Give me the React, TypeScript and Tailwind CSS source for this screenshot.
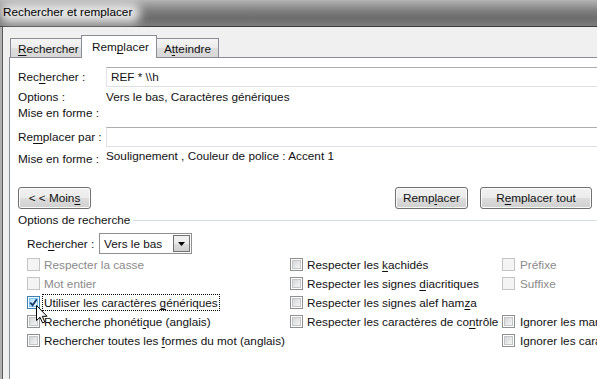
import type { ReactNode } from 'react'

function K({ children }: { children: ReactNode }) {
  return <span className="underline underline-offset-[2px] decoration-1">{children}</span>
}

function Btn({ children, w }: { children: ReactNode; w: string }) {
  return (
    <div
      className={`${w} h-[22px] shrink-0 flex items-center justify-center rounded-[3px] border border-[#707070] bg-[linear-gradient(#f2f2f2_0%,#ebebeb_50%,#dddddd_51%,#cfcfcf_100%)] shadow-[inset_0_0_0_1px_#fbfbfb]`}
    >
      <span className="whitespace-nowrap">{children}</span>
    </div>
  )
}

function Check({ state = 'off' }: { state?: 'off' | 'on' | 'disabled' }) {
  if (state === 'disabled') {
    return <div className="w-[13px] h-[13px] shrink-0 border border-[#c4c4c4] bg-[#f4f4f4]" />
  }
  if (state === 'on') {
    return (
      <div className="w-[13px] h-[13px] shrink-0 border border-[#3c7fb1] bg-white p-px">
        <div className="w-full h-full border border-[#79c6f9] bg-[linear-gradient(135deg,#b1dffd,#eaf6fd)] relative">
          <svg viewBox="0 0 9 9" className="absolute -left-px -top-px w-[9px] h-[9px]">
            <path d="M1.2 4.6 L3.6 7.2 L7.8 1.2" fill="none" stroke="#1c3a70" strokeWidth="1.8" />
          </svg>
        </div>
      </div>
    )
  }
  return (
    <div className="w-[13px] h-[13px] shrink-0 border border-[#8e8f8f] bg-white p-px">
      <div className="w-full h-full border border-[#c3c5c8] bg-[linear-gradient(135deg,#d4d6d9,#f5f5f5)]" />
    </div>
  )
}

function Opt({
  state,
  children,
  gap = 'gap-[4px]',
}: {
  state?: 'off' | 'on' | 'disabled'
  children: ReactNode
  gap?: string
}) {
  return (
    <div className={`h-[19px] flex items-center ${gap} whitespace-nowrap ${state === 'disabled' ? 'text-[#8a8a8a]' : ''}`}>
      <Check state={state} />
      <span>{children}</span>
    </div>
  )
}

export default function App() {
  return (
    <div className="w-[597px] h-[379px] overflow-hidden relative bg-[#f0f0f0] font-['Liberation_Sans',Arial,sans-serif] text-[11.75px] leading-[16px] text-[#111]">
      {/* title bar */}
      <div className="relative h-[27px] border-b border-[#3e3e3e] bg-[linear-gradient(#b4b4b4_0%,#9a9a9a_20%,#7c7c7c_45%,#6c6c6c_70%,#7d7d7d_100%)]">
        <div className="absolute left-0 top-[3px] w-[140px] h-[20px] rounded-[8px] bg-[#e4e4e4] blur-[5px]" />
        <div className="relative pl-[3px] pt-[4px] text-black whitespace-nowrap">Rechercher et remplacer</div>
      </div>

      <div className="flex h-full">
        <div className="w-[2px] shrink-0 bg-[#b0b0b0]" />
        <div className="w-px shrink-0 bg-[#5a5a5a]" />
        <div className="flex-1 min-w-0 pt-[8px] pl-[6px]">
          {/* tabs */}
          <div className="flex items-end h-[22px] pl-px relative z-10">
            <div className="w-[72px] h-[19px] shrink-0 border border-b-0 border-[#898c95] bg-[linear-gradient(#f5f5f5_0%,#ebebeb_50%,#dedede_51%,#d6d6d6_100%)] pl-[7px] pt-[2px] whitespace-nowrap">
              <K>R</K>echercher
            </div>
            <div className="w-[76px] h-[23px] shrink-0 -mx-px -mb-px border border-b-0 border-[#898c95] bg-white pl-[10px] pt-[3px] whitespace-nowrap">
              Rem<K>p</K>lacer
            </div>
            <div className="w-[63px] h-[19px] shrink-0 border border-b-0 border-[#898c95] bg-[linear-gradient(#f5f5f5_0%,#ebebeb_50%,#dedede_51%,#d6d6d6_100%)] pl-[7px] pt-[2px] whitespace-nowrap">
              A<K>t</K>teindre
            </div>
          </div>

          {/* panel */}
          <div className="w-[760px] h-[400px] border border-[#898c95] bg-white pl-[8px] pt-[9px]">
            <div className="flex items-center h-[20px]">
              <div className="w-[88px] shrink-0 whitespace-nowrap">
                Rec<K>h</K>ercher :
              </div>
              <div className="w-[560px] h-[20px] border border-[#abadb3] border-b-[#dbdfe6] border-l-[#e2e3ea] pl-[4px] flex items-center">
                <span>REF * \\h</span>
              </div>
            </div>
            <div className="flex mt-[2px]">
              <div className="w-[88px] shrink-0">Options :</div>
              <div>Vers le bas, Caractères génériques</div>
            </div>
            <div>Mise en forme :</div>

            <div className="flex items-center h-[20px] mt-[6px]">
              <div className="w-[88px] shrink-0 whitespace-nowrap">
                Re<K>m</K>placer par :
              </div>
              <div className="w-[560px] h-[20px] border border-[#abadb3] border-b-[#dbdfe6] border-l-[#e2e3ea]" />
            </div>
            <div className="flex items-start mt-px">
              <div className="w-[88px] shrink-0 mt-[3px]">Mise en forme :</div>
              <div>Soulignement , Couleur de police : Accent 1</div>
            </div>

            {/* buttons */}
            <div className="flex mt-[20px]">
              <Btn w="w-[73px]">
                {'< < Moin'}
                <K>s</K>
              </Btn>
              <div className="w-[304px] shrink-0" />
              <Btn w="w-[73px]">
                Remp<K>l</K>acer
              </Btn>
              <div className="w-[12px] shrink-0" />
              <Btn w="w-[112px]">
                R<K>e</K>mplacer tout
              </Btn>
            </div>

            {/* search options group */}
            <div className="flex items-center gap-[3px] mt-[3px] w-[700px]">
              <div className="whitespace-nowrap">Options de recherche</div>
              <div className="flex-1 h-px bg-[#d5dfe5]" />
            </div>

            <div className="flex items-center h-[21px] mt-[5px] pl-[9px]">
              <div className="w-[72px] shrink-0 whitespace-nowrap">
                Rec<K>h</K>ercher :
              </div>
              <div className="w-[93px] h-[21px] border border-[#8e8f8f] bg-white flex items-center p-px">
                <div className="flex-1 pl-[3px]">Vers le bas</div>
                <div className="w-[17px] h-full border border-[#707070] bg-[linear-gradient(#f2f2f2_0%,#ebebeb_50%,#dddddd_51%,#cfcfcf_100%)] flex items-center justify-center">
                  <svg viewBox="0 0 7 4" className="w-[7px] h-[4px]">
                    <path d="M0 0 H7 L3.5 4 Z" fill="#000" />
                  </svg>
                </div>
              </div>
            </div>

            <div className="grid grid-cols-[263px_212px_260px] mt-px pl-[9px]">
              <div>
                <Opt state="disabled">Respecter la casse</Opt>
                <Opt state="disabled">Mot entier</Opt>
                <div className="h-[19px] flex items-center gap-[2px] whitespace-nowrap">
                  <Check state="on" />
                  <span className="border border-dotted border-black px-px leading-[15px]">
                    Utiliser les caractères <K>g</K>énériques
                  </span>
                </div>
                <Opt>
                  Recherche phonéti<K>q</K>ue (anglais)
                </Opt>
                <Opt>
                  Rechercher toutes les <K>f</K>ormes du mot (anglais)
                </Opt>
              </div>
              <div>
                <Opt>
                  Respecter les <K>k</K>achidés
                </Opt>
                <Opt>
                  Respecter les signes <K>d</K>iacritiques
                </Opt>
                <Opt>
                  Respecter les signes alef ham<K>z</K>a
                </Opt>
                <Opt>
                  Respecter les caractères de co<K>n</K>trôle
                </Opt>
              </div>
              <div>
                <Opt state="disabled" gap="gap-[5px]">
                  Préfixe
                </Opt>
                <Opt state="disabled" gap="gap-[5px]">
                  Suffixe
                </Opt>
                <div className="h-[19px]" />
                <Opt gap="gap-[5px]">Ignorer les marques de ponctuation</Opt>
                <Opt gap="gap-[5px]">Ignorer les caractères d'espacement</Opt>
              </div>
            </div>
          </div>
        </div>
      </div>

      {/* mouse pointer */}
      <svg viewBox="0 0 12 19" className="absolute left-[36px] top-[305px] w-[12px] h-[19px]">
        <path d="M0.5 0.5 V15.5 L4 12.2 L6.6 18 L8.8 17 L6.3 11.3 H11 Z" fill="#fff" stroke="#000" strokeWidth="1" strokeLinejoin="round" />
      </svg>
    </div>
  )
}
